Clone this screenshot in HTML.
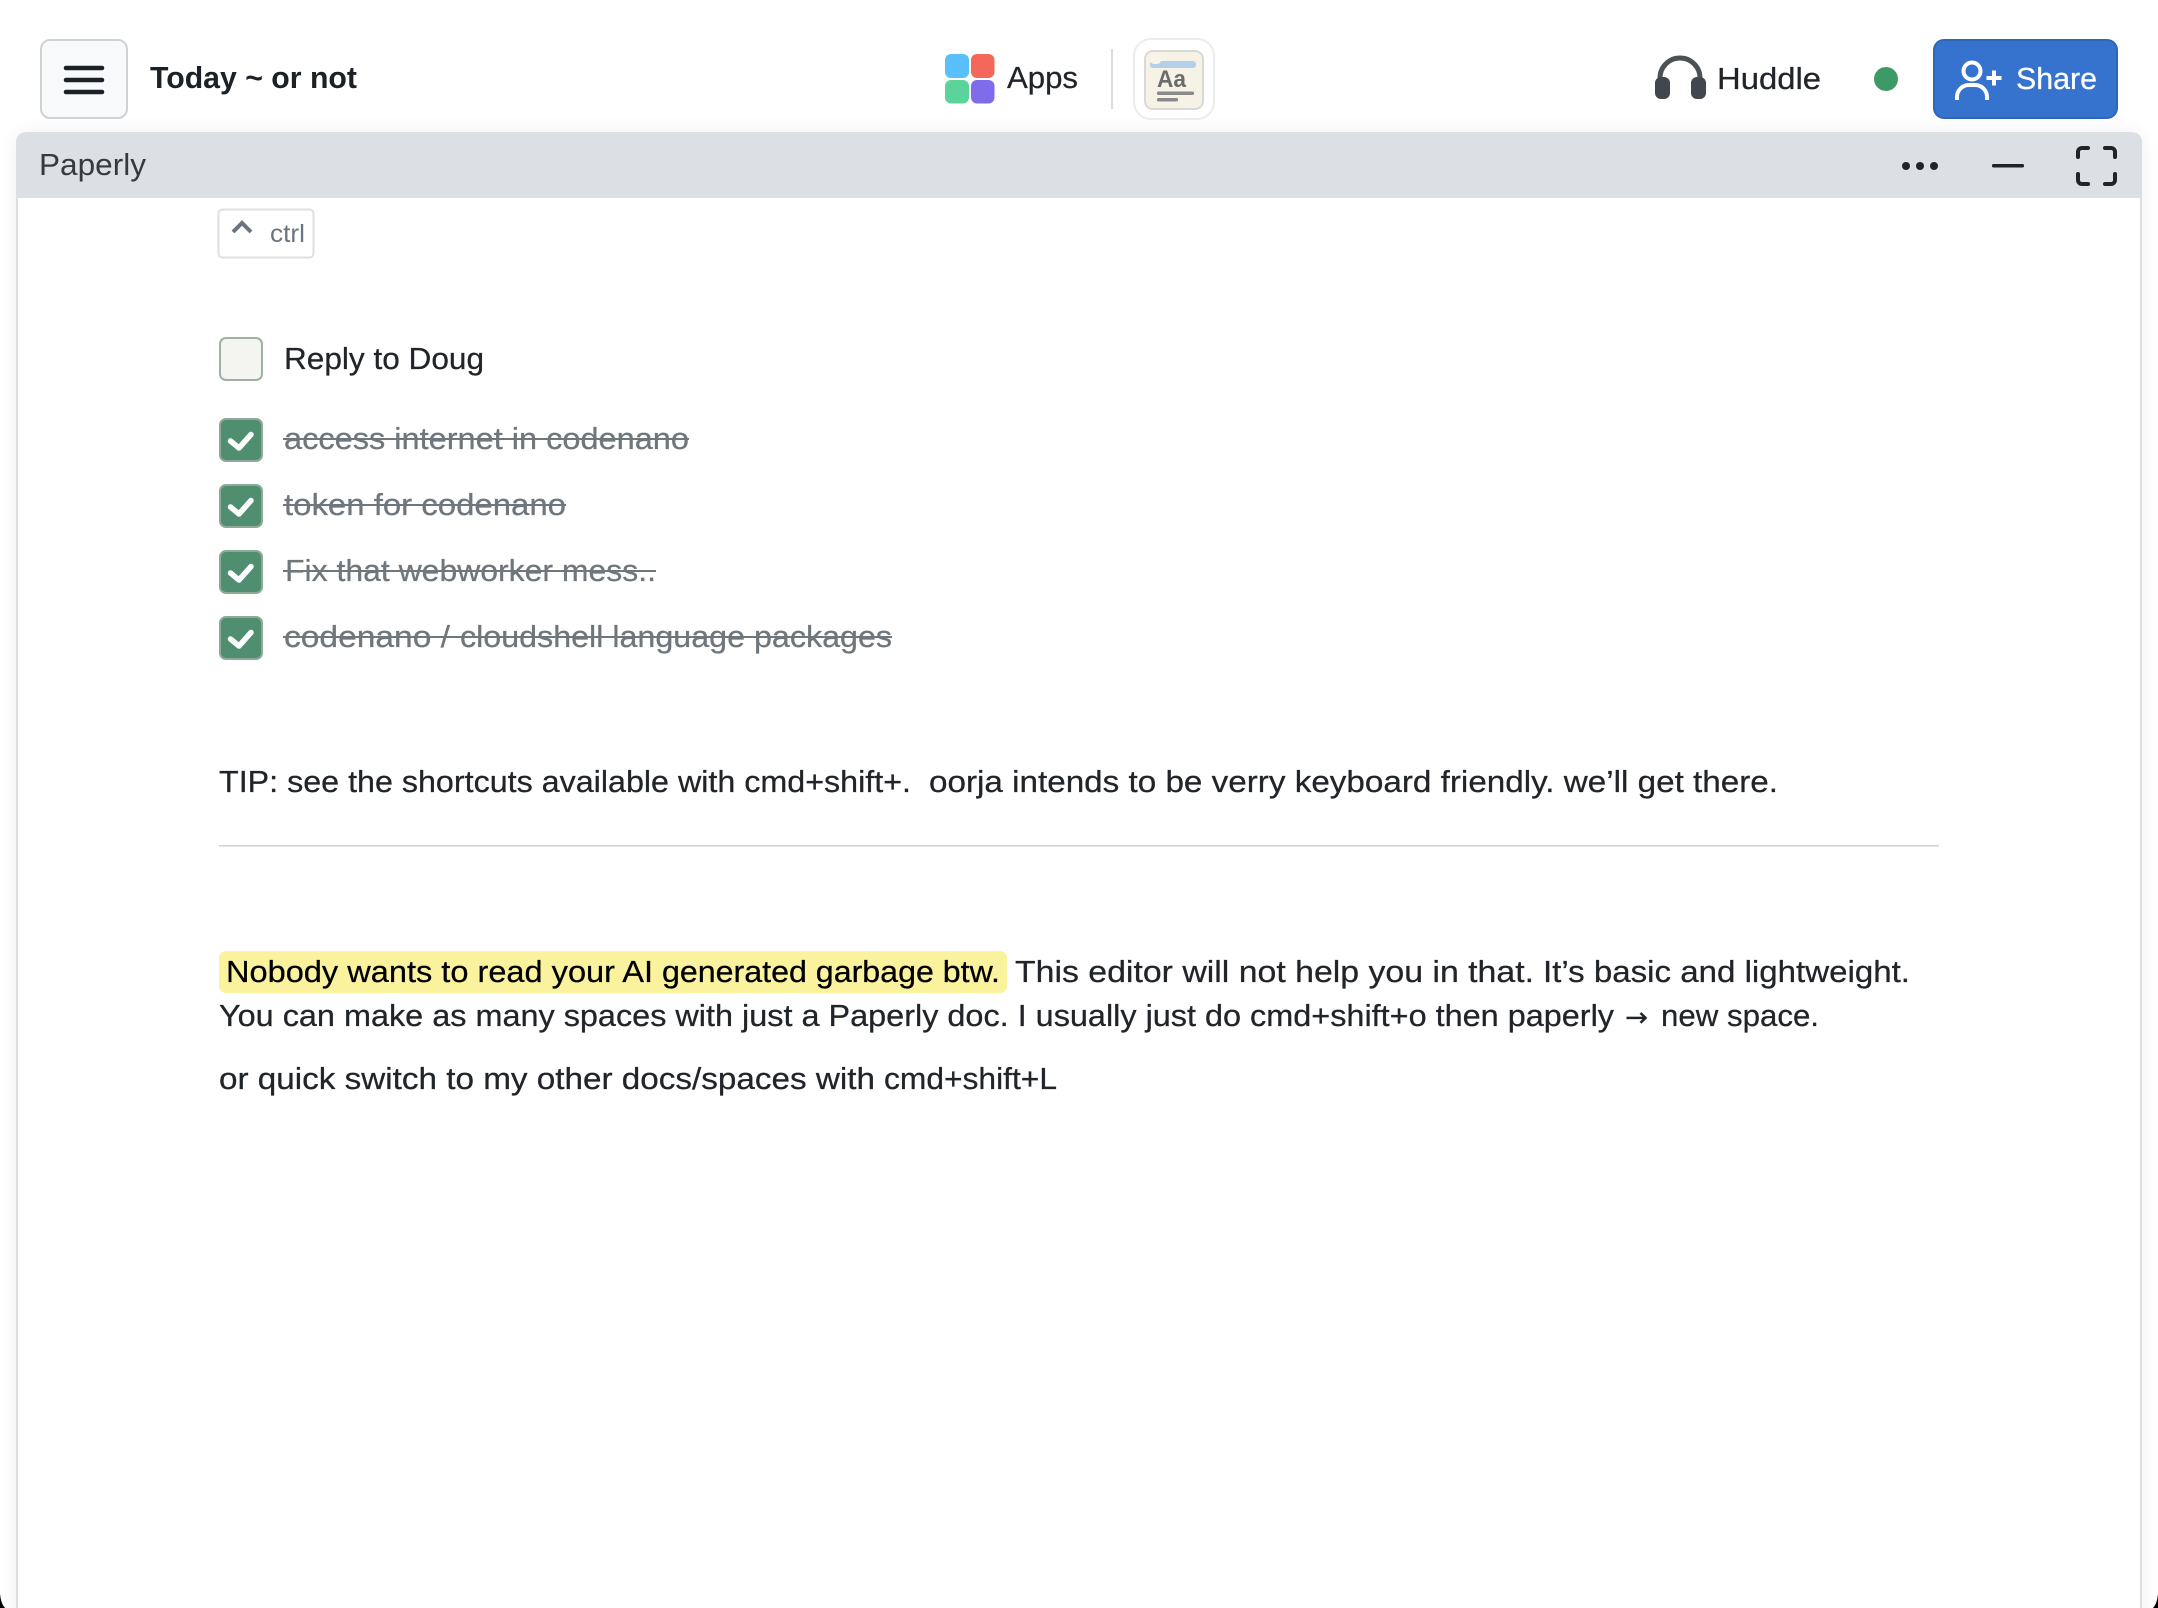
<!DOCTYPE html>
<html lang="en">
<head>
<meta charset="utf-8">
<title>Today ~ or not</title>
<style>
html,body{margin:0;padding:0;width:2158px;height:1608px;overflow:hidden;background:#fff}
#root{position:relative;width:2158px;height:1608px;overflow:hidden;background:#fff}
#win{position:absolute;left:16px;top:132px;width:2122px;height:1520px;background:#fff;border:2px solid #dcdee1;border-top:0;border-radius:10px;box-shadow:0 0 20px rgba(30,40,60,.06)}
svg{position:absolute;left:0;top:0;display:block}
text{font-family:"Liberation Sans",sans-serif;font-size:31px;fill:#212529;stroke:#212529;stroke-width:.25}
.s{fill:#6f767c;stroke:#6f767c}
.l{stroke:#6f767c;stroke-width:2}
.n{stroke:none}
</style>
</head>
<body>
<div id="root">
<div id="win"></div>
<svg width="2158" height="1608" viewBox="0 0 2158 1608" xmlns="http://www.w3.org/2000/svg">
<!-- window header -->
<path d="M17 198V142a10 10 0 0 1 10-10H2131a10 10 0 0 1 10 10V198Z" fill="#dcdfe3"/>

<!-- menu button -->
<rect x="41" y="40" width="86" height="78" rx="9" fill="#f8f9fa" stroke="#cfd2d4" stroke-width="2"/>
<g stroke="#1b2126" stroke-width="4.5" stroke-linecap="round">
<line x1="66" y1="68" x2="102" y2="68"/><line x1="66" y1="80" x2="102" y2="80"/><line x1="66" y1="92" x2="102" y2="92"/>
</g>
<text class="n" x="150" y="88" textLength="207" lengthAdjust="spacingAndGlyphs" style="font-weight:700;fill:#1b2126">Today ~ or not</text>

<!-- apps -->
<rect x="945" y="54" width="24" height="24" rx="6" fill="#5ac0fb"/>
<rect x="971" y="54" width="23.500" height="24" rx="6" fill="#f4675b"/>
<rect x="945" y="80" width="24" height="23.500" rx="6" fill="#5ad49b"/>
<rect x="971" y="80" width="23.500" height="23.500" rx="6" fill="#7f6ceb"/>
<text x="1007" y="88" textLength="71" lengthAdjust="spacingAndGlyphs">Apps</text>
<rect x="1111" y="49" width="2" height="60" fill="#dcdcdc"/>

<!-- doc icon -->
<rect x="1134" y="39" width="80" height="80" rx="17" fill="#fff" stroke="#ebecee" stroke-width="2"/>
<rect x="1145" y="51" width="58" height="58" rx="8" fill="#f6f3e6" stroke="#d9d9d6" stroke-width="2"/>
<rect x="1150" y="61" width="46" height="7" rx="3" fill="#b4cfe9"/>
<rect x="1150" y="53" width="11" height="11" rx="4" fill="#f8f5e8"/>
<text class="n" x="1157" y="87" textLength="29" lengthAdjust="spacingAndGlyphs" style="font-weight:700;font-size:24px;fill:#6c6c6c">Aa</text>
<rect x="1157" y="91.500" width="37" height="3.500" rx="1.500" fill="#8a8a8a"/>
<rect x="1157" y="98" width="21" height="3.500" rx="1.500" fill="#8a8a8a"/>

<!-- huddle -->
<path d="M1660 82V78a20 20 0 0 1 40 0V82" fill="none" stroke="#4c5156" stroke-width="5"/>
<rect x="1655" y="77" width="15" height="22" rx="6" fill="#41474c"/>
<rect x="1691" y="77" width="15" height="22" rx="6" fill="#41474c"/>
<text x="1717" y="89" textLength="104" lengthAdjust="spacingAndGlyphs">Huddle</text>
<circle cx="1886" cy="79" r="12" fill="#3d9a66"/>

<!-- share -->
<rect x="1934" y="40" width="183" height="78" rx="10" fill="#3573cf" stroke="#2f66b8" stroke-width="2"/>
<g fill="none" stroke="#fff" stroke-width="4">
<circle cx="1972" cy="71" r="8.500"/>
<path d="M1957 100V97a12 12 0 0 1 12-12h6a12 12 0 0 1 12 12V100"/>
<path d="M1986.500 78H2001.500M1994 70.500V85.500"/>
</g>
<text x="2016" y="89" textLength="81" lengthAdjust="spacingAndGlyphs" style="fill:#fff;stroke:#fff">Share</text>

<!-- header controls -->
<text class="n" x="39" y="175" textLength="107" lengthAdjust="spacingAndGlyphs" style="fill:#343a40">Paperly</text>
<circle cx="1906" cy="166" r="4" fill="#1f2429"/>
<circle cx="1920" cy="166" r="4" fill="#1f2429"/>
<circle cx="1934" cy="166" r="4" fill="#1f2429"/>
<rect x="1992" y="164" width="32" height="3.500" rx="1.500" fill="#1f2429"/>
<g fill="none" stroke="#1f2429" stroke-width="4" stroke-linecap="round">
<path d="M2078 157V152a4 4 0 0 1 4-4H2088"/>
<path d="M2105 148H2111a4 4 0 0 1 4 4V157"/>
<path d="M2078 174V180a4 4 0 0 0 4 4H2088"/>
<path d="M2105 184H2111a4 4 0 0 0 4-4V174"/>
</g>

<!-- kbd -->
<rect x="218.500" y="209.500" width="95" height="48" rx="4" fill="#fff" stroke="#dee0e2" stroke-width="2"/>
<path d="M233 232L242 223L251 232" fill="none" stroke="#6c757d" stroke-width="4"/>
<text class="n" x="270" y="242" textLength="35" lengthAdjust="spacingAndGlyphs" style="font-size:25px;fill:#6c757d">ctrl</text>

<!-- tasks -->
<rect x="220" y="338" width="42" height="42" rx="6" fill="#f4f5f1" stroke="#9fb0a4" stroke-width="2"/>
<text x="284" y="369" textLength="200" lengthAdjust="spacingAndGlyphs">Reply to Doug</text>

<g transform="translate(219,418)">
<rect x="1" y="1" width="42" height="42" rx="6" fill="#4f8f70" stroke="#8fa898" stroke-width="2"/>
<path d="M11.500 23L20 30L32 16.500" fill="none" stroke="#fff" stroke-width="5.500" stroke-linecap="round" stroke-linejoin="round"/>
</g>
<g transform="translate(219,484)">
<rect x="1" y="1" width="42" height="42" rx="6" fill="#4f8f70" stroke="#8fa898" stroke-width="2"/>
<path d="M11.500 23L20 30L32 16.500" fill="none" stroke="#fff" stroke-width="5.500" stroke-linecap="round" stroke-linejoin="round"/>
</g>
<g transform="translate(219,550)">
<rect x="1" y="1" width="42" height="42" rx="6" fill="#4f8f70" stroke="#8fa898" stroke-width="2"/>
<path d="M11.500 23L20 30L32 16.500" fill="none" stroke="#fff" stroke-width="5.500" stroke-linecap="round" stroke-linejoin="round"/>
</g>
<g transform="translate(219,616)">
<rect x="1" y="1" width="42" height="42" rx="6" fill="#4f8f70" stroke="#8fa898" stroke-width="2"/>
<path d="M11.500 23L20 30L32 16.500" fill="none" stroke="#fff" stroke-width="5.500" stroke-linecap="round" stroke-linejoin="round"/>
</g>

<text class="s" x="284" y="449" textLength="405" lengthAdjust="spacingAndGlyphs">access internet in codenano</text>
<line class="l" x1="283" y1="439" x2="689" y2="439"/>
<text class="s" x="284" y="515" textLength="282" lengthAdjust="spacingAndGlyphs">token for codenano</text>
<line class="l" x1="283" y1="505" x2="566" y2="505"/>
<text class="s" x="285" y="581" textLength="371" lengthAdjust="spacingAndGlyphs">Fix that webworker mess..</text>
<line class="l" x1="283" y1="571" x2="656" y2="571"/>
<text class="s" x="284" y="647" textLength="166" lengthAdjust="spacingAndGlyphs">codenano /</text>
<text class="s" x="460" y="647" textLength="432" lengthAdjust="spacingAndGlyphs">cloudshell language packages</text>
<line class="l" x1="283" y1="637" x2="892" y2="637"/>

<!-- tip -->
<text x="219" y="792" textLength="692" lengthAdjust="spacingAndGlyphs">TIP: see the shortcuts available with cmd+shift+.</text>
<text x="929" y="792" textLength="849" lengthAdjust="spacingAndGlyphs">oorja intends to be verry keyboard friendly. we’ll get there.</text>
<rect x="219" y="845" width="1720" height="1.500" fill="#cfd1d3"/>

<!-- paragraph -->
<rect x="219" y="951" width="788" height="42" rx="7" fill="#faf29c"/>
<text x="226" y="982" textLength="427" lengthAdjust="spacingAndGlyphs" style="fill:#000;stroke:#000">Nobody wants to read your AI</text>
<text x="662" y="982" textLength="338" lengthAdjust="spacingAndGlyphs" style="fill:#000;stroke:#000">generated garbage btw.</text>
<text x="1015" y="982" textLength="519" lengthAdjust="spacingAndGlyphs">This editor will not help you in that.</text>
<text x="1543" y="982" textLength="367" lengthAdjust="spacingAndGlyphs">It’s basic and lightweight.</text>
<text x="219" y="1026" textLength="1395" lengthAdjust="spacingAndGlyphs">You can make as many spaces with just a Paperly doc. I usually just do cmd+shift+o then paperly</text>
<text x="1625" y="1026" textLength="23" lengthAdjust="spacingAndGlyphs" style="font-family:'DejaVu Sans',sans-serif;font-size:26px">→</text>
<text x="1661" y="1026" textLength="158" lengthAdjust="spacingAndGlyphs">new space.</text>
<text x="219" y="1089" textLength="656" lengthAdjust="spacingAndGlyphs">or quick switch to my other docs/spaces with</text>
<text x="884" y="1089" textLength="173" lengthAdjust="spacingAndGlyphs">cmd+shift+L</text>

<!-- screen corners -->
<path d="M0 1594Q1 1604 5 1608H0Z" fill="#000"/>
<path d="M2158 1594Q2157 1604 2153 1608H2158Z" fill="#000"/>
</svg>
</div>
</body>
</html>
